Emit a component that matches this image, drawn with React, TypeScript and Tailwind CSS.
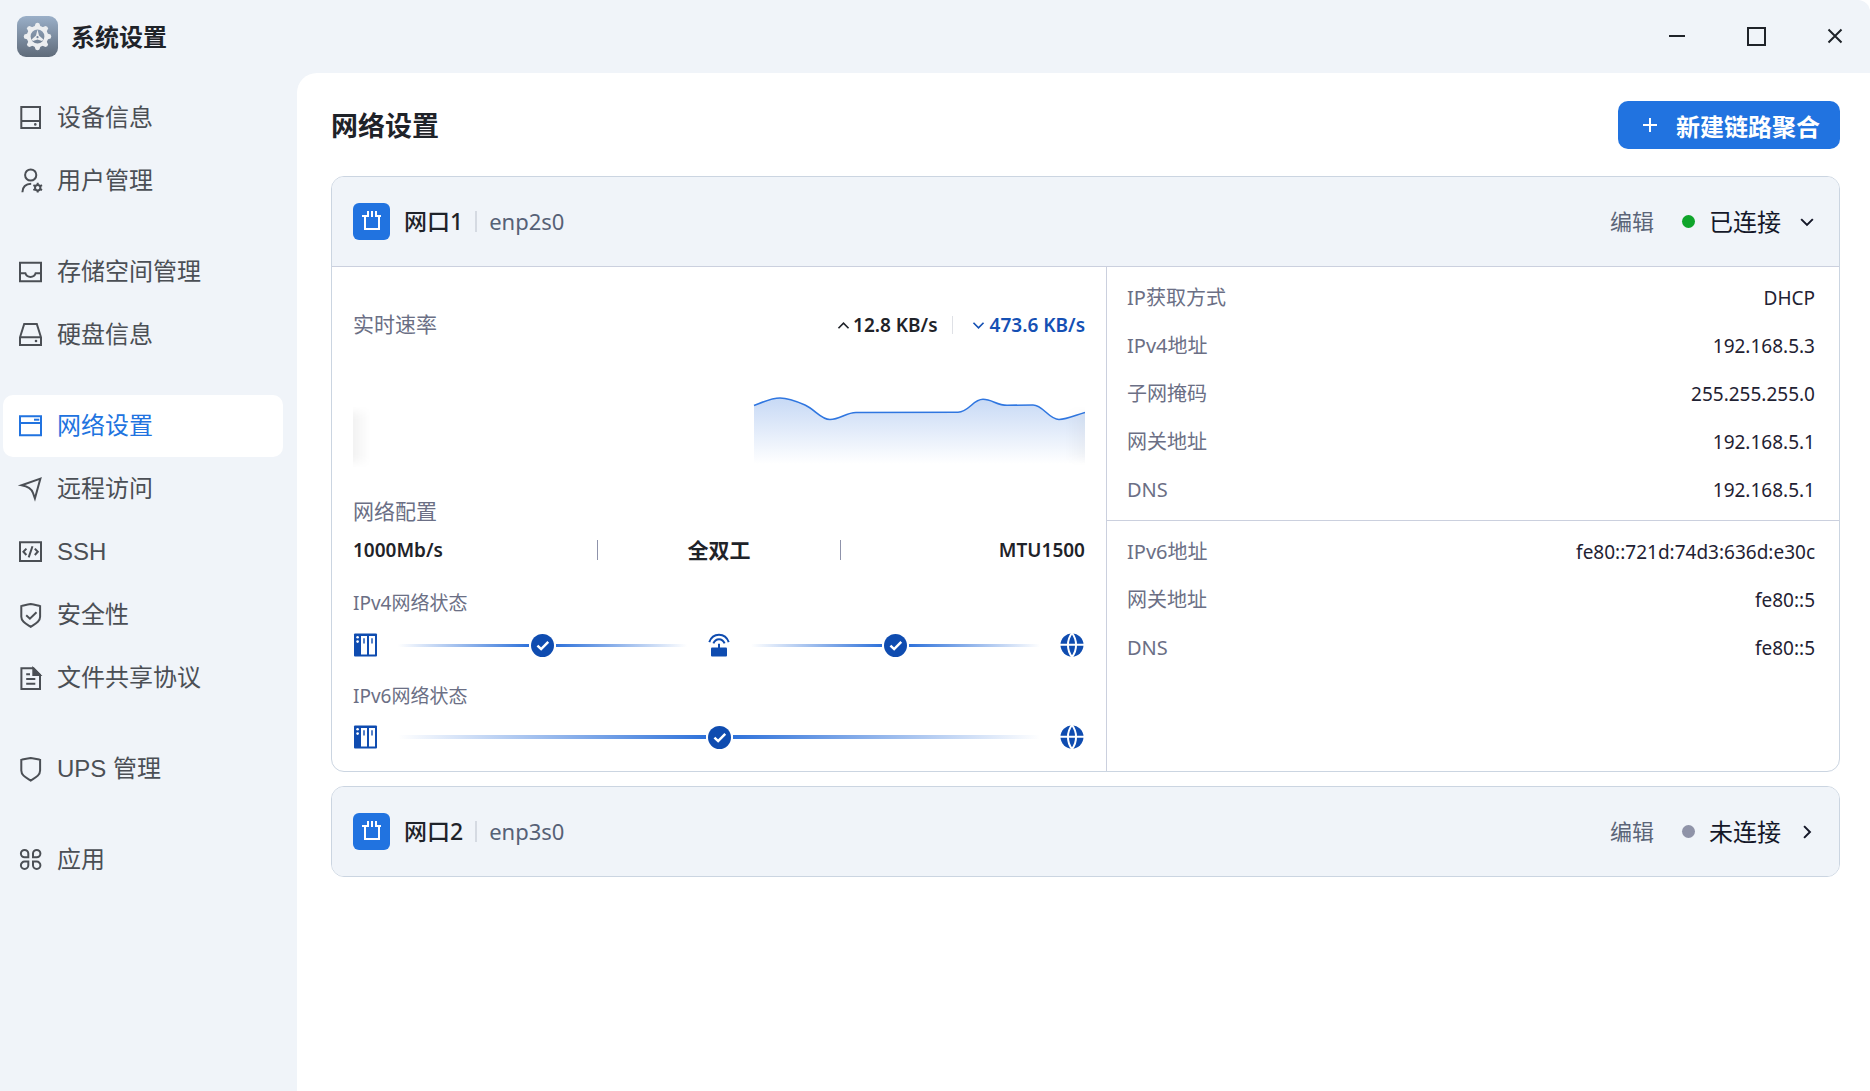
import React, { useState } from 'react';
import { clsx } from 'clsx';

type IconProps = { children: React.ReactNode; className?: string };

function Icon({ children, className = 'h-6 w-6' }: IconProps) {
  return (
    <svg
      viewBox="0 0 24 24"
      fill="none"
      stroke="currentColor"
      strokeWidth="2"
      aria-hidden="true"
      className={clsx('shrink-0 overflow-visible', className)}
    >
      {children}
    </svg>
  );
}

const DeviceIcon = () => (
  <Icon>
    <path d="M2.3 1H21V22H2.3ZM2.3 15H21" />
    <circle cx="16.3" cy="18.4" r="1.3" fill="currentColor" stroke="none" />
  </Icon>
);

const UserIcon = () => (
  <Icon>
    <circle cx="11.7" cy="6" r="5.6" />
    <path d="M3.4 23.3C3.6 18.2 6.8 14.9 12.2 14.8" />
    <circle cx="18.7" cy="18.7" r="2.7" strokeWidth="2" />
    <path
      d="M18.7 13.8v2M18.7 21.6v2M14.4 16.2l1.8 1M21.2 20.2l1.8 1M14.4 21.2l1.8-1M21.2 17.2l1.8-1"
      strokeWidth="2"
    />
  </Icon>
);

const StorageIcon = () => (
  <Icon>
    <path d="M1 2.7H22V21.3H1ZM1 13.3H6.4C7.2 15.8 8.9 17 11.5 17S15.8 15.8 16.6 13.3H22" />
  </Icon>
);

const DiskIcon = () => (
  <Icon>
    <path d="M5.2 1H17.8L22 14.3V22H1V14.3ZM1 14.3H22" />
    <circle cx="17" cy="18" r="1.3" fill="currentColor" stroke="none" />
  </Icon>
);

const NetworkIcon = () => (
  <Icon>
    <path d="M1 2.3H22V21.2H1ZM1 9H22" />
    <path d="M15 5.7H20.3" />
  </Icon>
);

const RemoteIcon = () => (
  <Icon>
    <path d="M21.4 1.6L2.6 8.3C8.5 9.4 12.3 11 14 16L15.9 21.4Z" />
  </Icon>
);

const CodeIcon = () => (
  <Icon>
    <path d="M1 2.3H22V21.1H1Z" />
    <path d="M7.4 8.6L4.4 11.8L7.4 15M15.8 8.6L18.8 11.8L15.8 15M13.5 6.2L9.7 17.4" />
  </Icon>
);

const ShieldCheckIcon = () => (
  <Icon>
    <path d="M11.7 1.1C8.7 1.4 5.3 2.4 2.3 3.1V13.8C2.3 18.4 6.5 20.5 11.7 23.8C16.9 20.5 21.1 18.4 21.1 13.8V3.1C18.1 2.4 14.7 1.4 11.7 1.1Z" />
    <path d="M7.2 12.3L10.9 15.7L17.5 9.2" />
  </Icon>
);

const FileIcon = () => (
  <Icon>
    <path d="M2.4 2.3H14.5L21 9V23H2.4Z" />
    <path d="M14.3 2.3V9H21Z" fill="currentColor" />
    <path d="M7.2 8.3H11M7.2 13H16.3M7.2 17.7H16.3" />
  </Icon>
);

const ShieldIcon = () => (
  <Icon>
    <path d="M11.7 .9C8.7 1.2 5.3 2.2 2.3 2.9V13.6C2.3 18.2 6.5 20.3 11.7 23.6C16.9 20.3 21.1 18.2 21.1 13.6V2.9C18.1 2.2 14.7 1.2 11.7 .9Z" />
  </Icon>
);

const AppsIcon = () => (
  <Icon>
    <path d="M9.3 9.3H5.6A3.7 3.7 0 1 1 9.3 5.6ZM14 9.3H17.7A3.7 3.7 0 1 0 14 5.6ZM9.3 13.6H5.6A3.7 3.7 0 1 0 9.3 17.3ZM14 13.6H17.7A3.7 3.7 0 1 1 14 17.3Z" />
  </Icon>
);

const navGroups = [
  [
    { label: '设备信息', icon: <DeviceIcon /> },
    { label: '用户管理', icon: <UserIcon /> },
  ],
  [
    { label: '存储空间管理', icon: <StorageIcon /> },
    { label: '硬盘信息', icon: <DiskIcon /> },
  ],
  [
    { label: '网络设置', icon: <NetworkIcon /> },
    { label: '远程访问', icon: <RemoteIcon /> },
    { label: 'SSH', icon: <CodeIcon /> },
    { label: '安全性', icon: <ShieldCheckIcon /> },
    { label: '文件共享协议', icon: <FileIcon /> },
  ],
  [{ label: 'UPS 管理', icon: <ShieldIcon /> }],
  [{ label: '应用', icon: <AppsIcon /> }],
];

const ipv4Rows = [
  ['IP获取方式', 'DHCP'],
  ['IPv4地址', '192.168.5.3'],
  ['子网掩码', '255.255.255.0'],
  ['网关地址', '192.168.5.1'],
  ['DNS', '192.168.5.1'],
];

const ipv6Rows = [
  ['IPv6地址', 'fe80::721d:74d3:636d:e30c'],
  ['网关地址', 'fe80::5'],
  ['DNS', 'fe80::5'],
];

const teeth = [0, 45, 90, 135, 180, 225, 270, 315];

function AppLogo() {
  return (
    <svg viewBox="0 0 41 41" aria-hidden="true" className="h-[41px] w-[41px] shrink-0">
      <defs>
        <linearGradient id="logoBg" x1="0" y1="0" x2="0" y2="1">
          <stop offset="0" stopColor="#9aafc8" />
          <stop offset="1" stopColor="#5f6b7a" />
        </linearGradient>
      </defs>
      <rect width="41" height="41" rx="9" fill="url(#logoBg)" />
      <g fill="#eceef0">
        {teeth.map((deg) => (
          <path key={deg} d="M17.2 11.5L18.6 7.4Q20.5 6 22.4 7.4L23.800 11.500Z" transform={`rotate(${deg} 20.5 20.5)`} />
        ))}
      </g>
      <circle cx="20.5" cy="20.5" r="8.8" fill="none" stroke="#eceef0" strokeWidth="3.800" />
      <path d="M20.5 13.500L22 19.500L26.500 23.500L25 25L20.500 23.500L16 25L14.500 23.500L19 19.500Z" fill="#eceef0" />
      <circle cx="20.5" cy="21.200" r="1.1" fill="#75839a" />
    </svg>
  );
}

function PortIcon() {
  return (
    <span className="flex h-[37px] w-[37px] shrink-0 items-center justify-center rounded-md bg-[#2173e0]">
      <svg viewBox="0 0 37 37" fill="none" stroke="#fff" strokeWidth="2" aria-hidden="true" className="h-[37px] w-[37px]">
        <path d="M9 13H15V8M19 8V14M28 13H23V8M12 13V26H26V13" />
      </svg>
    </span>
  );
}

function NasIcon() {
  return (
    <Icon className="h-6 w-6">
      <rect x="0" y="0.500" width="23" height="23" rx="1" fill="currentColor" stroke="none" />
      <path d="M7 3H13V21.500H7ZM15 3H21V21.500H15Z" fill="#fff" stroke="none" />
      <path d="M10 5.300V10.500M18 5.300V10.500" strokeOpacity=".7" />
      <circle cx="3.600" cy="4.200" r="1.3" fill="#fff" stroke="none" />
      <circle cx="3.600" cy="8.600" r="1.3" fill="#fff" stroke="none" />
    </Icon>
  );
}

function RouterIcon() {
  return (
    <Icon className="h-6 w-6">
      <rect x="4" y="14.500" width="16" height="9" rx="1" fill="currentColor" stroke="none" />
      <path d="M12 10.800V15M6.400 10.400C7.600 7.500 9.600 6.200 12 6.200S16.400 7.500 17.600 10.400M2.300 9.100C4 4.200 7.600 1.700 12 1.700S20 4.200 21.700 9.100" />
    </Icon>
  );
}

function GlobeIcon() {
  return (
    <Icon className="h-6 w-6">
      <circle cx="12" cy="12" r="11.5" fill="currentColor" stroke="none" />
      <path d="M12 0C6.600 7 6.600 17 12 24C17.400 17 17.400 7 12 0ZM0 11.800H24" stroke="#fff" />
    </Icon>
  );
}

function CheckIcon() {
  return (
    <Icon className="h-[23px] w-[23px]">
      <circle cx="12" cy="12" r="12" fill="currentColor" stroke="none" />
      <path d="M6.7 12.2L10.6 15.8L18 8.3" stroke="#fff" strokeWidth="2.6" />
    </Icon>
  );
}

function Link({ thick = false }: { thick?: boolean }) {
  return (
    <div className="flex min-w-0 flex-1 items-center gap-0.5">
      <span className={clsx('flex-1 bg-linear-to-r from-transparent to-[#2f72da]', thick ? 'h-1' : 'h-[3px]')} />
      <CheckIcon />
      <span className={clsx('flex-1 bg-linear-to-l from-transparent to-[#2f72da]', thick ? 'h-1' : 'h-[3px]')} />
    </div>
  );
}

function SpeedChart() {
  return (
    <svg viewBox="0 0 732 90" preserveAspectRatio="none" role="img" aria-label="实时速率" className="mt-10 block h-[90px] w-full">
      <defs>
        <linearGradient id="area" gradientUnits="userSpaceOnUse" x1="0" y1="18" x2="0" y2="84">
          <stop offset="0" stopColor="#2f72da" stopOpacity=".27" />
          <stop offset="1" stopColor="#2f72da" stopOpacity="0" />
        </linearGradient>
        <linearGradient id="fadeLeft">
          <stop offset="0" stopColor="#000" stopOpacity=".05" />
          <stop offset="1" stopColor="#000" stopOpacity="0" />
        </linearGradient>
        <linearGradient id="fadeRight">
          <stop offset="0" stopColor="#000" stopOpacity="0" />
          <stop offset="1" stopColor="#000" stopOpacity=".03" />
        </linearGradient>
        <filter id="soft">
          <feGaussianBlur stdDeviation="0 4" />
        </filter>
      </defs>
      <rect x="0" y="32" width="18" height="50" fill="url(#fadeLeft)" filter="url(#soft)" />
      <path
        d="M401 25.5C410 22 418 18 427 18C436 18 444 21.500 452 25C462 29.500 468 39.500 477 39.500C487 39.500 493 32.500 503 32.500L605 32.200C616 32 620 19.300 630 19.300C639 19.300 644 25.300 654 25.300L680 25C690 25 696 39.500 706 39.500C714 39.500 723 35 732 32.500V84H401Z"
        fill="url(#area)"
      />
      <path
        d="M401 25.500C410 22 418 18 427 18C436 18 444 21.500 452 25C462 29.500 468 39.500 477 39.500C487 39.500 493 32.500 503 32.500L605 32.200C616 32 620 19.300 630 19.300C639 19.300 644 25.300 654 25.300L680 25C690 25 696 39.500 706 39.500C714 39.500 723 35 732 32.500"
        fill="none"
        stroke="#2f76e0"
        strokeWidth="1.6"
      />
      <rect x="712" y="32" width="20" height="48" fill="url(#fadeRight)" filter="url(#soft)" />
    </svg>
  );
}

function InfoList({ rows }: { rows: string[][] }) {
  return (
    <dl>
      {rows.map(([label, value]) => (
        <div key={label} className="flex h-12 items-center justify-between">
          <dt className="text-[20px] text-[#6b6f85]">{label}</dt>
          <dd className="text-[19px] text-[#1f2233]">{value}</dd>
        </div>
      ))}
    </dl>
  );
}

type PortProps = {
  name: string;
  device: string;
  connected: boolean;
  open: boolean;
  onToggle: () => void;
  children?: React.ReactNode;
};

function PortCard({ name, device, connected, open, onToggle, children }: PortProps) {
  return (
    <section className="overflow-hidden rounded-[13px] border border-[#cbd5e1] bg-white">
      <header className="flex h-[89px] items-center bg-[#f0f4f9] pr-[22px] pl-[21px]">
        <PortIcon />
        <h2 className="ml-3.5 text-[23px] font-medium text-[#1f2329]">{name}</h2>
        <span className="mx-3 h-[21px] w-0.5 bg-[#d5dae2]" />
        <span className="text-[22px] text-[#566176]">{device}</span>
        <button type="button" className="ml-auto text-[22px] text-[#5b6578]">
          编辑
        </button>
        <button type="button" aria-expanded={open} onClick={onToggle} className="ml-7 flex items-center text-[24px] text-[#151829]">
          <span className={clsx('mr-3.5 h-[13px] w-[13px] rounded-full', connected ? 'bg-[#0fa52b]' : 'bg-[#8f93a8]')} />
          {connected ? '已连接' : '未连接'}
          <Icon className="ml-4 h-5 w-5">
            <path d={open ? 'M5 8.5L12 15.5L19 8.5' : 'M8.500 5L15.500 12L8.500 19'} strokeWidth="2.4" />
          </Icon>
        </button>
      </header>
      {open && children}
    </section>
  );
}

export default function App() {
  const [active, setActive] = useState('网络设置');
  const [open1, setOpen1] = useState(true);
  const [open2, setOpen2] = useState(false);

  return (
    <div className="flex min-h-screen flex-col rounded-tr-xl bg-[#f0f4f9] font-['Liberation_Sans','Noto_Sans_CJK_SC',sans-serif]">
      <header className="flex h-[73px] items-center pr-[15px] pl-[17px]">
        <AppLogo />
        <span className="ml-[13px] pt-0.5 text-[24px] font-bold text-[#1f2329]">系统设置</span>
        <div className="ml-auto flex gap-[39px] text-[#1f2329]">
          <button type="button" aria-label="最小化" className="flex h-10 w-10 items-center justify-center">
            <Icon>
              <path d="M4 11H20" />
            </Icon>
          </button>
          <button type="button" aria-label="最大化" className="flex h-10 w-10 items-center justify-center">
            <Icon>
              <rect x="4" y="3" width="17" height="17" />
            </Icon>
          </button>
          <button type="button" aria-label="关闭" className="flex h-10 w-10 items-center justify-center">
            <Icon>
              <path d="M5.500 4.500L18.500 17.500M18.500 4.500L5.500 17.500" />
            </Icon>
          </button>
        </div>
      </header>

      <div className="flex flex-1">
        <nav className="flex w-[297px] shrink-0 flex-col gap-[29px] pt-3.5 pr-3.5 pl-[3px]">
          {navGroups.map((group) => (
            <ul key={group[0].label} className="flex flex-col gap-px">
              {group.map((item) => (
                <li key={item.label}>
                  <button
                    type="button"
                    onClick={() => setActive(item.label)}
                    className={clsx(
                      'flex h-[62px] w-full items-center gap-3.5 rounded-[10px] pl-4 text-[24px]',
                      active === item.label ? 'bg-white text-[#2173e0]' : 'text-[#4b4f55]'
                    )}
                  >
                    {item.icon}
                    {item.label}
                  </button>
                </li>
              ))}
            </ul>
          ))}
        </nav>

        <main className="min-w-0 flex-1 rounded-tl-[20px] bg-white pt-7 pr-[30px] pl-[34px] font-['Noto_Sans','Noto_Sans_CJK_SC',sans-serif]">
          <div className="mb-[27px] flex h-12 items-center justify-between">
            <h1 className="pt-[3px] text-[27px] font-bold text-[#1f2329]">网络设置</h1>
            <button type="button" className="flex h-12 items-center rounded-[10px] bg-[#2173e0] pr-5 pl-[25px] text-[24px] font-bold text-white">
              <Icon className="mr-[19px] h-3.5 w-3.5">
                <path d="M12 0V24M0 12H24" strokeWidth="3.4" />
              </Icon>
              <span className="pt-[3px]">新建链路聚合</span>
            </button>
          </div>

          <div className="flex flex-col gap-3.5">
            <PortCard name="网口1" device="enp2s0" connected open={open1} onToggle={() => setOpen1(!open1)}>
              <div className="grid grid-cols-[774fr_733fr] border-t border-[#cbd0de]">
                <div className="px-[21px] pt-[43px] pb-[22px] text-[#6b6f85]">
                  <div className="flex h-[30px] items-center text-[19px] font-semibold">
                    <h3 className="mr-auto text-[21px] font-normal">实时速率</h3>
                    <Icon className="mr-1 h-[11px] w-[11px] text-[#1f2329]">
                      <path d="M1 18L12 7L23 18" strokeWidth="3.600" />
                    </Icon>
                    <span className="text-[#1f2329]">12.8 KB/s</span>
                    <span className="mr-5 ml-3.5 h-[18px] w-px bg-[#dfe1e6]" />
                    <Icon className="mr-1.5 h-[11px] w-[11px] text-[#1450b4]">
                      <path d="M1 6L12 17L23 6" strokeWidth="3.600" />
                    </Icon>
                    <span className="text-[#1450b4]">473.6 KB/s</span>
                  </div>
                  <SpeedChart />
                  <h3 className="mt-[26px] text-[21px] leading-[30px]">网络配置</h3>
                  <div className="mt-[9px] grid h-[30px] grid-cols-3 items-center text-[19px] leading-5 font-semibold text-[#1f2329]">
                    <span>1000Mb/s</span>
                    <span className="border-x border-[#8f93ab] text-center text-[21px] font-bold">全双工</span>
                    <span className="text-right">MTU1500</span>
                  </div>
                  <h3 className="mt-6 text-[19px] leading-7">IPv4网络状态</h3>
                  <div className="mt-4 flex items-center gap-5 px-px text-[#0f4cb0]">
                    <NasIcon />
                    <Link />
                    <RouterIcon />
                    <Link />
                    <GlobeIcon />
                  </div>
                  <h3 className="mt-[25px] text-[19px] leading-7">IPv6网络状态</h3>
                  <div className="mt-[15px] flex items-center gap-5 px-px text-[#0f4cb0]">
                    <NasIcon />
                    <Link thick />
                    <GlobeIcon />
                  </div>
                </div>
                <div className="border-l border-[#cbd0de]">
                  <div className="border-b border-[#cbd0de] pt-[7px] pr-6 pb-1.5 pl-5">
                    <InfoList rows={ipv4Rows} />
                  </div>
                  <div className="pt-[7px] pr-6 pl-5">
                    <InfoList rows={ipv6Rows} />
                  </div>
                </div>
              </div>
            </PortCard>
            <PortCard name="网口2" device="enp3s0" connected={false} open={open2} onToggle={() => setOpen2(!open2)} />
          </div>
        </main>
      </div>
    </div>
  );
}
